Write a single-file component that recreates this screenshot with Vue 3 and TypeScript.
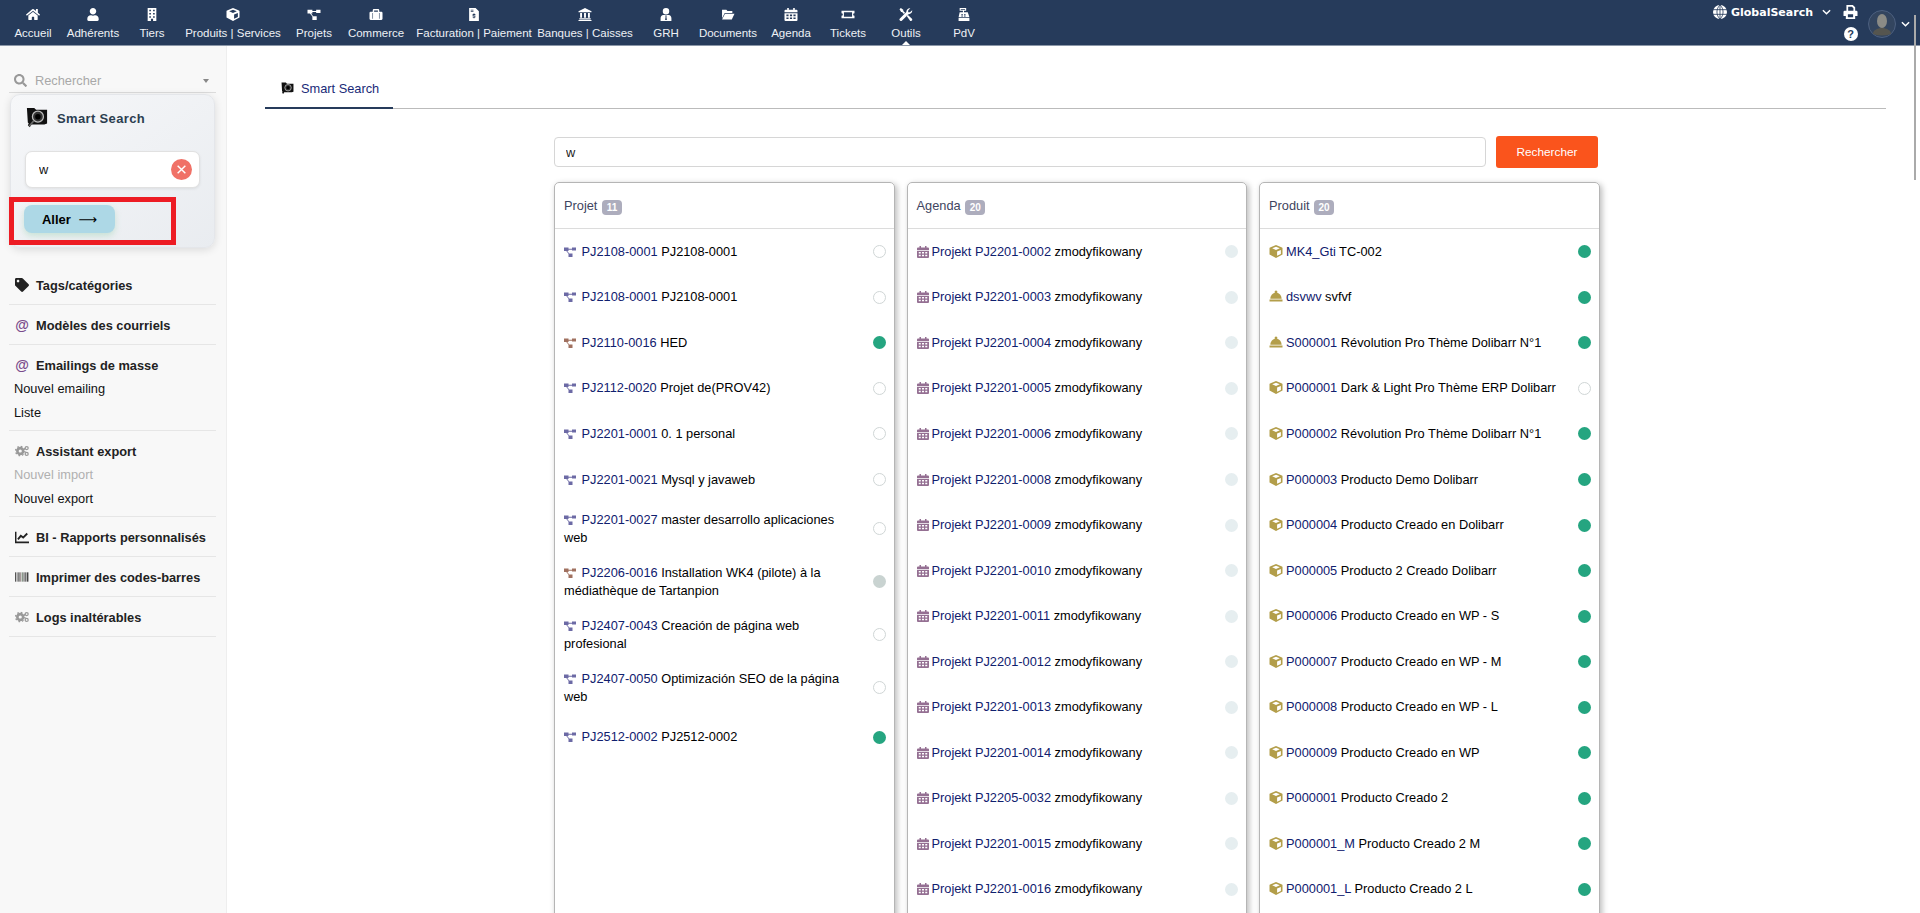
<template>
  <div class="page">
    <header class="topbar">
      <nav class="mainmenu">
        <a
          v-for="item in navItems"
          :key="item.label"
          class="navitem"
          :class="{ active: item.label === 'Outils' }"
          :style="{ width: `${item.width}px` }"
        >
          <Ico :name="item.icon" class="navicon" />
          <span>{{ item.label }}</span>
        </a>
      </nav>
      <div class="topright">
        <div class="globalsearch">
          <svg class="globe" viewBox="0 0 24 24">
            <circle cx="12" cy="12" r="12" fill="#fff" />
            <path d="M0 8h24M0 16h24M12 0v24M12 0C5 6 5 18 12 24M12 0c7 6 7 18 0 24" fill="none" stroke="#263b5b" stroke-width="1.4" />
          </svg>
          <span>GlobalSearch</span>
          <svg class="chev" viewBox="0 0 10 6"><path d="M1 1l4 4 4-4" fill="none" stroke="#fff" stroke-width="1.6" /></svg>
        </div>
        <div class="tools">
          <Ico name="print" class="printicon" />
          <span class="help">?</span>
        </div>
        <div class="avatar">
          <svg viewBox="0 0 28 28">
            <circle cx="14" cy="14" r="13.5" fill="#33455f" stroke="#4d6080" />
            <ellipse cx="14" cy="11" rx="5" ry="7" fill="#8b8b86" />
            <path d="M5 24c0-4 4-5 7-6h4c3 1 7 2 7 6q-9 3-18 0z" fill="#55554f" />
          </svg>
        </div>
        <svg class="chev userchev" viewBox="0 0 10 6"><path d="M1 1l4 4 4-4" fill="none" stroke="#fff" stroke-width="1.6" /></svg>
      </div>
    </header>

    <div class="layout">
      <aside class="sidebar">
        <div class="sidesearch">
          <Ico name="search" class="searchicon" />
          <span class="placeholder">Rechercher</span>
          <i class="caret"></i>
        </div>

        <div class="smartcard">
          <div class="smarttitle">
            <svg class="smarticon" viewBox="0 0 24 24">
              <path d="M1 1h8l2 2h12v15l-3 1H6l-2 3-2-2 1-2-1-1z" fill="#111" />
              <circle cx="13" cy="10.500" r="6" fill="#333" stroke="#bbb" stroke-width="1.4" />
              <circle cx="13" cy="10.500" r="3" fill="#000" />
              <path d="M8.500 15l-5 6" stroke="#666" stroke-width="2" />
            </svg>
            <span>Smart Search</span>
          </div>
          <div class="smartinput">
            <input type="text" value="w" />
            <button class="clear" type="button">
              <svg viewBox="0 0 10 10"><path d="M1.500 1.500l7 7M8.500 1.500l-7 7" stroke="#fff" stroke-width="1.300" /></svg>
            </button>
          </div>
          <button class="go" type="button">Aller <span class="arrow">⟶</span></button>
          <div class="redbox"></div>
        </div>

        <section v-for="section in menuSections" :key="section.title" class="menusection" :class="{ withsubs: section.subs }">
          <div class="menutitle">
            <span v-if="section.icon === 'at'" class="at">@</span>
            <svg v-else-if="section.icon === 'cogs'" class="menuicon" viewBox="0 0 24 24">
              <circle cx="9" cy="12" r="5" fill="none" stroke="#999" stroke-width="4.500" />
              <circle cx="9" cy="12" r="8" fill="none" stroke="#999" stroke-width="2.400" stroke-dasharray="2.800 3.480" />
              <circle cx="20" cy="7" r="2.600" fill="none" stroke="#999" stroke-width="2.200" />
              <circle cx="20" cy="17" r="2.600" fill="none" stroke="#999" stroke-width="2.200" />
            </svg>
            <svg v-else-if="section.icon === 'chart'" class="menuicon" viewBox="0 0 24 24">
              <path d="M1 3v18h23" fill="none" stroke="#222" stroke-width="3" />
              <path d="M5 16l5-6 4 3 7-7" fill="none" stroke="#222" stroke-width="3.200" />
            </svg>
            <svg v-else-if="section.icon === 'barcode'" class="menuicon" viewBox="0 0 24 24">
              <rect v-for="bar in barcode" :key="bar.x" :x="bar.x" y="4" :width="bar.w" height="16" :fill="bar.c" />
            </svg>
            <Ico v-else name="tag" class="menuicon tagicon" />
            <span>{{ section.title }}</span>
          </div>
          <a v-for="sub in section.subs" :key="sub.label" class="menusub" :class="{ disabled: sub.disabled }">{{ sub.label }}</a>
        </section>
      </aside>

      <main class="content">
        <div class="tabs">
          <a class="tab">
            <svg class="tabicon" viewBox="0 0 24 24">
              <path d="M1 1h8l2 2h12v15l-3 1H6l-2 3-2-2 1-2-1-1z" fill="#111" />
              <circle cx="13" cy="10.500" r="6" fill="#333" stroke="#bbb" stroke-width="1.400" />
              <circle cx="13" cy="10.500" r="3" fill="#000" />
            </svg>
            Smart Search
          </a>
        </div>

        <div class="results">
          <div class="searchrow">
            <input class="mainsearch" type="text" value="w" />
            <button class="searchbtn" type="button">Rechercher</button>
          </div>
          <div class="columns">
            <div v-for="col in columns" :key="col.title" class="card">
              <div class="cardhead">
                {{ col.title }} <span class="badge">{{ col.count }}</span>
              </div>
              <div
                v-for="(row, i) in col.rows"
                :key="i"
                class="row"
              >
                <div class="rowtext">
                  <Ico :name="row.icon" class="rowicon" :class="[row.icon, row.tint]" />
                  <a class="ref">{{ row.ref }}</a> {{ row.label }}
                </div>
                <span class="dot" :class="row.status"></span>
              </div>
            </div>
          </div>
        </div>
      </main>
    </div>
    <div class="scrollthumb"></div>
  </div>
</template>

<script setup lang="ts">
import { h } from "vue";

type IconDef = { vb: string; d: string };
type Row = { icon: string; ref: string; label: string; status: string; tint?: string };

const icons: Record<string, IconDef> = {
  home: {
    vb: "0 0 576 512",
    d: "M280.37 148.26L96 300.11V464a16 16 0 0 0 16 16l112.06-.29a16 16 0 0 0 15.92-16V368a16 16 0 0 1 16-16h64a16 16 0 0 1 16 16v95.64a16 16 0 0 0 16 16.05L464 480a16 16 0 0 0 16-16V300L295.67 148.26a12.19 12.19 0 0 0-15.3 0zM571.6 251.47L488 182.56V44.05a12 12 0 0 0-12-12h-56a12 12 0 0 0-12 12v72.61L318.47 43a48 48 0 0 0-61 0L4.34 251.47a12 12 0 0 0-1.6 16.9l25.5 31A12 12 0 0 0 45.15 301l235.22-193.74a12.19 12.19 0 0 1 15.3 0L530.9 301a12 12 0 0 0 16.9-1.6l25.5-31a12 12 0 0 0-1.7-16.93z",
  },
  user: {
    vb: "0 0 448 512",
    d: "M224 256c70.7 0 128-57.3 128-128S294.7 0 224 0 96 57.3 96 128s57.3 128 128 128zm89.6 32h-16.7c-22.2 10.2-46.9 16-72.9 16s-50.6-5.8-72.9-16h-16.7C60.2 288 0 348.2 0 422.4V464c0 26.5 21.5 48 48 48h352c26.5 0 48-21.5 48-48v-41.6c0-74.2-60.2-134.4-134.4-134.4z",
  },
  search: {
    vb: "0 0 512 512",
    d: "M505 442.7L405.3 343c-4.5-4.5-10.6-7-17-7H372c27.6-35.3 44-79.7 44-128C416 93.1 322.9 0 208 0S0 93.1 0 208s93.1 208 208 208c48.3 0 92.7-16.4 128-44v16.3c0 6.4 2.5 12.5 7 17l99.7 99.7c9.4 9.4 24.6 9.4 33.9 0l28.3-28.3c9.4-9.4 9.4-24.6.1-34zM208 336c-70.7 0-128-57.2-128-128 0-70.7 57.2-128 128-128 70.7 0 128 57.2 128 128 0 70.7-57.2 128-128 128z",
  },
  tag: {
    vb: "0 0 512 512",
    d: "M0 252.118V48C0 21.49 21.49 0 48 0h204.118a48 48 0 0 1 33.941 14.059l211.882 211.882c18.745 18.745 18.745 49.137 0 67.882L293.823 497.941c-18.745 18.745-49.137 18.745-67.882 0L14.059 286.059A48 48 0 0 1 0 252.118zM112 64c-26.51 0-48 21.49-48 48s21.49 48 48 48 48-21.49 48-48-21.49-48-48-48z",
  },
  building: {
    vb: "0 0 24 24",
    d: "M4 0h16v24h-6v-4h-4v4H4zM7 3v3h3V3zM14 3v3h3V3zM7 9v3h3V9zM14 9v3h3V9zM7 15v3h3v-3zM14 15v3h3v-3z",
  },
  cube: {
    vb: "0 0 24 24",
    d: "M12 0l11 4.500a1 1 0 0 1 1 1v12l-12 6.500L0 17.500v-12a1 1 0 0 1 1-1zM12 3L5 6l7 3 7-3zM14 12v8l7-3.500V9z",
  },
  diagram: {
    vb: "0 0 24 24",
    d: "M0 3h9v2.500h7V3h8v6h-8V7.500H9V10H6.500l4 5H17v7H9v-6.500L4.500 10H0z",
  },
  suitcase: {
    vb: "0 0 24 24",
    d: "M2 7h4V4a2 2 0 0 1 2-2h8a2 2 0 0 1 2 2v3h4a2 2 0 0 1 2 2v11a2 2 0 0 1-2 2H2a2 2 0 0 1-2-2V9a2 2 0 0 1 2-2zM8.500 7h7V4.500h-7zM5.500 9v11h1V9zM17.500 9v11h1V9z",
  },
  invoice: {
    vb: "0 0 24 24",
    d: "M3 0h12l6 6v18H3zM6 3v1.500h5V3zM6 6v1.500h5V6zM11 10v1.200H9.500V15H13v1H9.500v1.500H11V19h2v-1.500h1.500V14H11v-1h3.500v-1.800H13V10z",
  },
  bank: {
    vb: "0 0 24 24",
    d: "M12 0l12 6v2H0V6zM3 9h3.500v9H3zM10.250 9h3.500v9h-3.500zM17.500 9H21v9h-3.500zM1.500 19h21v2h-21zM0 22h24v2H0z",
  },
  usertie: {
    vb: "0 0 24 24",
    d: "M12 0a6 6 0 1 1 0 12 6 6 0 0 1 0-12zM7 13h10c3 0 5 2.500 5 6v5H2v-5c0-3.500 2-6 5-6zM10.500 14l.8 2-1 6h3.400l-1-6 .8-2z",
  },
  folder: {
    vb: "0 0 24 24",
    d: "M1 3h8l2 2.500h9V9H6L1 19zM6.500 10.500H24L19 21H1z",
  },
  calendar: {
    vb: "0 0 24 24",
    d: "M5 0h3v3h8V0h3v3h3a2 2 0 0 1 2 2v3H0V5a2 2 0 0 1 2-2h3zM0 9.500h24V22a2 2 0 0 1-2 2H2a2 2 0 0 1-2-2zM3.500 12v3h4v-3zM10 12v3h4v-3zM16.500 12v3h4v-3zM3.500 17.500v3h4v-3zM10 17.500v3h4v-3zM16.500 17.500v3h4v-3z",
  },
  ticket: {
    vb: "0 0 24 24",
    d: "M0 5h24v4.500a2.500 2.500 0 0 0 0 5V19H0v-4.500a2.500 2.500 0 0 0 0-5zM4.500 8v8h15V8z",
  },
  tools: {
    vb: "0 0 24 24",
    d: "M.8 19.200L12.600 7.400A6.500 6.500 0 0 1 20 .6L16 4.600V8h3.400l4-4a6.500 6.500 0 0 1-6.800 7.400L4.800 23.200a2.800 2.800 0 0 1-4-4zM0 2.500L2.500 0 7 3v2.500l3.300 3.300L8 11 4.800 7.500H3zM13 14.500l2-2L23 20a2.500 2.500 0 0 1-3.500 3.500z",
  },
  register: {
    vb: "0 0 24 24",
    d: "M4 0h12v5h-4v3h7l3 9H2l2-9h6V5H4zM6 2v1h8V2zM7 11v1.500h3V11zM12 11v1.500h3V11zM7 14v1.500h3V14zM12 14v1.500h3V14zM2 18.500h20V24H2z",
  },
  print: {
    vb: "0 0 24 24",
    d: "M5 0h11l4 4v6h2a2 2 0 0 1 2 2v7h-4v5H4v-5H0v-7a2 2 0 0 1 2-2h3zM8 3v7h9V5.500L14.500 3zM7.500 16v5h9v-5z",
  },
  bell: {
    vb: "0 0 24 24",
    d: "M12 1a2.500 2.500 0 0 1 2 4c5 1 8 5 8.500 11h-21C2 10 5 6 10 5a2.500 2.500 0 0 1 2-4zM0 17.500h24V21H0z",
  },
};

const Ico = (props: { name: string }) => {
  const icon = icons[props.name];
  return h("svg", { viewBox: icon.vb }, [
    h("path", { d: icon.d, fill: "currentColor", "fill-rule": "evenodd" }),
  ]);
};
Ico.props = ["name"];

const navItems = [
  { label: "Accueil", icon: "home", width: 50 },
  { label: "Adhérents", icon: "user", width: 70 },
  { label: "Tiers", icon: "building", width: 48 },
  { label: "Produits | Services", icon: "cube", width: 114 },
  { label: "Projets", icon: "diagram", width: 48 },
  { label: "Commerce", icon: "suitcase", width: 76 },
  { label: "Facturation | Paiement", icon: "invoice", width: 120 },
  { label: "Banques | Caisses", icon: "bank", width: 102 },
  { label: "GRH", icon: "usertie", width: 60 },
  { label: "Documents", icon: "folder", width: 64 },
  { label: "Agenda", icon: "calendar", width: 62 },
  { label: "Tickets", icon: "ticket", width: 52 },
  { label: "Outils", icon: "tools", width: 64 },
  { label: "PdV", icon: "register", width: 52 },
];

const menuSections = [
  { title: "Tags/catégories", icon: "tag" },
  { title: "Modèles des courriels", icon: "at" },
  {
    title: "Emailings de masse",
    icon: "at",
    subs: [{ label: "Nouvel emailing" }, { label: "Liste" }],
  },
  {
    title: "Assistant export",
    icon: "cogs",
    subs: [{ label: "Nouvel import", disabled: true }, { label: "Nouvel export" }],
  },
  { title: "BI - Rapports personnalisés", icon: "chart" },
  { title: "Imprimer des codes-barres", icon: "barcode" },
  { title: "Logs inaltérables", icon: "cogs" },
];

const barcode = [
  { x: 0, w: 2, c: "#555" },
  { x: 3, w: 1.5, c: "#777" },
  { x: 5.5, w: 2.5, c: "#666" },
  { x: 9, w: 1.5, c: "#8a7a7a" },
  { x: 11.5, w: 2, c: "#7a8a7a" },
  { x: 14.5, w: 2, c: "#666" },
  { x: 17.5, w: 1.5, c: "#555" },
  { x: 20, w: 3, c: "#444" },
];

const project = (ref: string, label: string, status: string, tint = "open"): Row => ({
  icon: "diagram",
  ref,
  label,
  status,
  tint,
});
const agenda = (num: string): Row => ({
  icon: "calendar",
  ref: `Projekt ${num}`,
  label: "zmodyfikowany",
  status: "todo",
});
const product = (ref: string, label: string, status = "on"): Row => ({
  icon: "cube",
  ref,
  label,
  status,
});
const service = (ref: string, label: string): Row => ({
  icon: "bell",
  ref,
  label,
  status: "on",
});

const columns = [
  {
    title: "Projet",
    count: 11,
    rows: [
      project("PJ2108-0001", "PJ2108-0001", "off"),
      project("PJ2108-0001", "PJ2108-0001", "off"),
      project("PJ2110-0016", "HED", "on", "warm"),
      project("PJ2112-0020", "Projet de(PROV42)", "off"),
      project("PJ2201-0001", "0. 1 personal", "off"),
      project("PJ2201-0021", "Mysql y javaweb", "off"),
      project("PJ2201-0027", "master desarrollo aplicaciones web", "off"),
      project("PJ2206-0016", "Installation WK4 (pilote) à la médiathèque de Tartanpion", "closed", "warm"),
      project("PJ2407-0043", "Creación de página web profesional", "off"),
      project("PJ2407-0050", "Optimización SEO de la página web", "off"),
      project("PJ2512-0002", "PJ2512-0002", "on"),
    ],
  },
  {
    title: "Agenda",
    count: 20,
    rows: [
      "PJ2201-0002",
      "PJ2201-0003",
      "PJ2201-0004",
      "PJ2201-0005",
      "PJ2201-0006",
      "PJ2201-0008",
      "PJ2201-0009",
      "PJ2201-0010",
      "PJ2201-0011",
      "PJ2201-0012",
      "PJ2201-0013",
      "PJ2201-0014",
      "PJ2205-0032",
      "PJ2201-0015",
      "PJ2201-0016",
    ].map(agenda),
  },
  {
    title: "Produit",
    count: 20,
    rows: [
      product("MK4_Gti", "TC-002"),
      service("dsvwv", "svfvf"),
      service("S000001", "Révolution Pro Thème Dolibarr N°1"),
      product("P000001", "Dark & Light Pro Thème ERP Dolibarr", "off"),
      product("P000002", "Révolution Pro Thème Dolibarr N°1"),
      product("P000003", "Producto Demo Dolibarr"),
      product("P000004", "Producto Creado en Dolibarr"),
      product("P000005", "Producto 2 Creado Dolibarr"),
      product("P000006", "Producto Creado en WP - S"),
      product("P000007", "Producto Creado en WP - M"),
      product("P000008", "Producto Creado en WP - L"),
      product("P000009", "Producto Creado en WP"),
      product("P000001", "Producto Creado 2"),
      product("P000001_M", "Producto Creado 2 M"),
      product("P000001_L", "Producto Creado 2 L"),
    ],
  },
];
</script>

<style>
html,
body {
  height: 100%;
  overflow: hidden;
}
</style>

<style scoped>
.page {
  position: relative;
  height: 913px;
  overflow: hidden;
  display: flex;
  flex-direction: column;
  font-family: "Liberation Sans", Arial, sans-serif;
  font-size: 12.8px;
  color: #000;
  background: #fff;
}

/* top bar */
.topbar {
  flex: none;
  height: 45px;
  display: flex;
  justify-content: space-between;
  background: #263b5b;
  border-bottom: 1px solid #8b97a8;
  color: #fff;
}
.mainmenu {
  display: flex;
  padding-left: 8px;
}
.navitem {
  position: relative;
  display: flex;
  flex-direction: column;
  align-items: center;
  white-space: nowrap;
  font-size: 11.5px;
  color: #eef1f5;
  padding-top: 8px;
}
.navicon {
  width: 14px;
  height: 13px;
  margin-bottom: 6px;
  color: #fff;
}
.navitem.active::after {
  content: "";
  position: absolute;
  bottom: 0;
  left: 50%;
  margin-left: -4px;
  border-left: 4px solid transparent;
  border-right: 4px solid transparent;
  border-bottom: 4px solid #fff;
}
.topright {
  display: flex;
  align-items: flex-start;
  padding-right: 10px;
}
.globalsearch {
  display: flex;
  align-items: center;
  padding-top: 5px;
  margin-right: 12px;
  font-family: "DejaVu Sans", sans-serif;
  font-weight: bold;
  font-size: 11px;
  color: #fff;
}
.globe {
  width: 14px;
  height: 14px;
  margin-right: 4px;
}
.chev {
  width: 9px;
  height: 6px;
  margin-left: 9px;
}
.tools {
  width: 15px;
  display: flex;
  flex-direction: column;
  align-items: center;
  gap: 8px;
  padding-top: 5px;
  margin-right: 10px;
  color: #fff;
}
.printicon {
  width: 15px;
  height: 14px;
}
.help {
  width: 14px;
  height: 14px;
  border-radius: 50%;
  background: #fff;
  color: #263b5b;
  font-size: 11px;
  font-weight: bold;
  line-height: 14px;
  text-align: center;
}
.avatar {
  width: 28px;
  height: 28px;
  margin-top: 10px;
}
.avatar svg {
  display: block;
  width: 28px;
  height: 28px;
}
.userchev {
  margin: 21px 0 0 5px;
}

/* layout */
.layout {
  flex: 1;
  display: flex;
  min-height: 0;
}

/* sidebar */
.sidebar {
  flex: none;
  width: 227px;
  box-sizing: border-box;
  padding: 0 10px 0 9px;
  background: #f8f8f8;
  border-right: 1px solid #eeeeee;
}
.sidesearch {
  height: 47px;
  box-sizing: border-box;
  padding: 27px 5px 0;
  display: flex;
  align-items: flex-start;
  border-bottom: 1px solid #dcdcdc;
  color: #a8a8a8;
}
.searchicon {
  width: 13px;
  height: 13px;
  margin: 1px 8px 0 0;
  color: #999;
}
.placeholder {
  flex: 1;
  line-height: 15px;
}
.caret {
  margin: 6px 2px 0 0;
  border-left: 3.5px solid transparent;
  border-right: 3.5px solid transparent;
  border-top: 4px solid #888;
}
.smartcard {
  position: relative;
  margin: 1px 1px 17px 1px;
  height: 154px;
  box-sizing: border-box;
  padding: 13px 14px;
  border: 1px solid #e4e6ea;
  border-radius: 10px;
  background: linear-gradient(145deg, #f6f7f9, #e9ecf0);
  box-shadow: 0 2px 8px rgba(0, 0, 0, 0.12);
}
.smarttitle {
  display: flex;
  align-items: center;
  gap: 9px;
  height: 20px;
  font-weight: bold;
  font-size: 13px;
  letter-spacing: 0.35px;
  color: #2c3e50;
}
.smarticon {
  width: 22px;
  height: 22px;
  margin-left: 1px;
}
.smartinput {
  position: relative;
  margin-top: 23px;
}
.smartinput input {
  display: block;
  width: 100%;
  height: 37px;
  box-sizing: border-box;
  padding: 0 32px 0 13px;
  border: 1px solid #e1e1e1;
  border-radius: 7px;
  background: #fff;
  box-shadow: 0 1px 3px rgba(0, 0, 0, 0.08);
  font: 12.8px "Liberation Sans", Arial, sans-serif;
  color: #111;
  outline: none;
}
.clear {
  position: absolute;
  right: 8px;
  top: 8px;
  width: 21px;
  height: 21px;
  padding: 5px;
  border: 0;
  border-radius: 50%;
  background: #f07167;
}
.clear svg {
  display: block;
}
.go {
  display: block;
  margin: 17px 0 0 -1px;
  width: 91px;
  height: 28px;
  padding: 0;
  border: 0;
  border-radius: 8px;
  background: #add8e6;
  box-shadow: 0 3px 6px rgba(130, 200, 160, 0.35);
  font: bold 13px "Liberation Sans", Arial, sans-serif;
  color: #000;
}
.arrow {
  font-family: "DejaVu Sans", sans-serif;
  font-weight: normal;
  margin-left: 4px;
}
.redbox {
  position: absolute;
  left: -2px;
  top: 102px;
  width: 167px;
  height: 48px;
  box-sizing: border-box;
  border: 5px solid #ed1c24;
}
.menusection {
  padding: 8px 0 7px;
  border-bottom: 1px solid #e6e6e6;
}
.menusection.withsubs {
  padding-bottom: 5px;
}
.menutitle {
  display: flex;
  align-items: center;
  height: 24px;
  padding-left: 6px;
  font-weight: bold;
  color: #222;
}
.menutitle > span:last-child {
  margin-left: 7px;
}
.menuicon {
  width: 14px;
  height: 14px;
  flex: none;
}
.tagicon {
  color: #222;
}
.at {
  width: 14px;
  flex: none;
  font-size: 14px;
  color: #7a4b8c;
  text-align: center;
}
.menusub {
  display: block;
  height: 24px;
  line-height: 24px;
  padding-left: 5px;
  color: #111;
}
.menusub.disabled {
  color: #b0b0b0;
}

/* main */
.content {
  flex: 1;
  min-width: 0;
  padding: 0 34px 0 38px;
}
.tabs {
  height: 63px;
  box-sizing: border-box;
  display: flex;
  align-items: flex-end;
  border-bottom: 1px solid #bbbbbb;
}
.tab {
  display: flex;
  align-items: center;
  gap: 7px;
  box-sizing: border-box;
  width: 128px;
  height: 62px;
  padding: 22px 0 0 16px;
  margin-bottom: -1px;
  border-bottom: 2px solid #263b5b;
  color: #1a2a78;
}
.tabicon {
  width: 13px;
  height: 13px;
}
.results {
  width: 1046px;
  margin: 27px 0 0 289px;
}
.searchrow {
  display: flex;
  align-items: center;
  gap: 10px;
  padding-right: 2px;
}
.mainsearch {
  flex: 1;
  height: 30px;
  box-sizing: border-box;
  padding: 0 11px;
  border: 1px solid #d6d6d6;
  border-radius: 4px;
  font: 12.8px "Liberation Sans", Arial, sans-serif;
  color: #222;
  outline: none;
}
.searchbtn {
  width: 102px;
  height: 32px;
  border: 0;
  border-radius: 3px;
  background: #fa541c;
  color: #fff;
  font: 11.8px "Liberation Sans", Arial, sans-serif;
}
.columns {
  display: grid;
  grid-template-columns: repeat(3, 340.5px);
  gap: 12px;
  margin-top: 14px;
}
.card {
  min-height: 800px;
  border: 1px solid #b5b5b5;
  border-radius: 5px;
  box-shadow: 2px 2px 6px rgba(0, 0, 0, 0.28);
}
.cardhead {
  height: 46px;
  box-sizing: border-box;
  padding: 15px 9px 0;
  border-bottom: 1px solid #dcdcdc;
  color: #3f4560;
}
.badge {
  display: inline-block;
  min-width: 20px;
  height: 15px;
  box-sizing: border-box;
  margin-left: 1px;
  padding: 0 3px;
  border-radius: 4px;
  background: #adadbd;
  color: #fff;
  font-size: 10px;
  font-weight: bold;
  line-height: 15px;
  text-align: center;
  vertical-align: -1px;
}
.row {
  display: flex;
  align-items: center;
  justify-content: space-between;
  box-sizing: border-box;
  min-height: 45.55px;
  padding: 8.5px 8px 8.5px 9px;
  line-height: 18px;
}
.rowtext {
  flex: 1;
  min-width: 0;
  margin-right: 20px;
}
.rowicon {
  width: 12px;
  height: 12px;
  vertical-align: -2px;
  margin-right: 3px;
}
.rowicon.diagram {
  margin-right: 5.5px;
}
.rowicon.open {
  color: #6c6aa5;
}
.rowicon.warm {
  color: #a0705f;
}
.rowicon.calendar {
  color: #946f92;
}
.rowicon.cube,
.rowicon.bell {
  width: 14px;
  height: 13px;
  color: #b39e4a;
}
.ref {
  color: #10206e;
}
.dot {
  flex: none;
  width: 13px;
  height: 13px;
  box-sizing: border-box;
  border-radius: 50%;
}
.dot.on {
  background: #25a580;
}
.dot.off {
  border: 1px solid #d0d6d6;
}
.dot.closed {
  background: #c9d3d1;
}
.dot.todo {
  background: #e6eef0;
}
.scrollthumb {
  position: absolute;
  right: 4px;
  top: 15px;
  width: 2px;
  height: 165px;
  background: #aaaaaa;
}
</style>
